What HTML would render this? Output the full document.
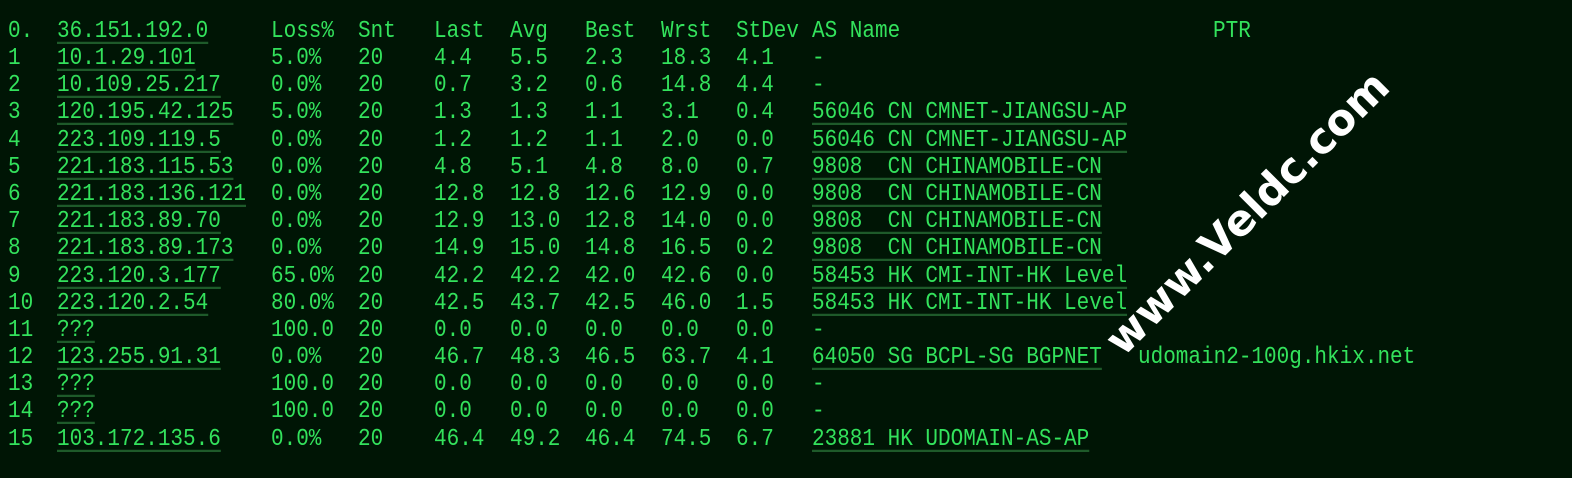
<!DOCTYPE html>
<html><head><meta charset="utf-8"><style>
html,body{margin:0;padding:0}
body{width:1572px;height:478px;background:#001505;overflow:hidden;position:relative;font-family:"Liberation Mono",monospace;font-size:21px;color:#33e25c}
.r{position:absolute;left:0;width:1572px;height:27px;line-height:27px;margin-top:1px}
.r span{position:absolute;white-space:pre;top:0;transform:scaleY(1.13);transform-origin:50% 60%}
.u{text-decoration:underline;text-decoration-color:#1e5a2a;text-decoration-thickness:2px;text-underline-offset:4px}
.c0{left:8px}.c1{left:57px}.c2{left:271px}.c3{left:358px}.c4{left:434px}.c5{left:510px}.c6{left:585px}.c7{left:661px}.c8{left:736px}.c9{left:812px}.c10{left:1138px}
.wm{position:absolute;left:1062px;top:196px;width:350px;text-align:center;font-family:"DejaVu Sans","Liberation Sans",sans-serif;font-weight:bold;font-size:43px;color:#fff;transform:rotate(-45deg);white-space:nowrap;line-height:56px}
</style></head><body>
<div class="r" style="top:18px"><span class="c0">0.</span><span class="c1 u">36.151.192.0</span><span class="c2">Loss%</span><span class="c3">Snt</span><span class="c4">Last</span><span class="c5">Avg</span><span class="c6">Best</span><span class="c7">Wrst</span><span class="c8">StDev</span><span class="c9">AS Name</span><span style="left:1213px">PTR</span></div>
<div class="r" style="top:45px"><span class="c0">1</span><span class="c1 u">10.1.29.101</span><span class="c2">5.0%</span><span class="c3">20</span><span class="c4">4.4</span><span class="c5">5.5</span><span class="c6">2.3</span><span class="c7">18.3</span><span class="c8">4.1</span><span class="c9">-</span></div>
<div class="r" style="top:72px"><span class="c0">2</span><span class="c1 u">10.109.25.217</span><span class="c2">0.0%</span><span class="c3">20</span><span class="c4">0.7</span><span class="c5">3.2</span><span class="c6">0.6</span><span class="c7">14.8</span><span class="c8">4.4</span><span class="c9">-</span></div>
<div class="r" style="top:99px"><span class="c0">3</span><span class="c1 u">120.195.42.125</span><span class="c2">5.0%</span><span class="c3">20</span><span class="c4">1.3</span><span class="c5">1.3</span><span class="c6">1.1</span><span class="c7">3.1</span><span class="c8">0.4</span><span class="c9 u">56046 CN CMNET-JIANGSU-AP</span></div>
<div class="r" style="top:127px"><span class="c0">4</span><span class="c1 u">223.109.119.5</span><span class="c2">0.0%</span><span class="c3">20</span><span class="c4">1.2</span><span class="c5">1.2</span><span class="c6">1.1</span><span class="c7">2.0</span><span class="c8">0.0</span><span class="c9 u">56046 CN CMNET-JIANGSU-AP</span></div>
<div class="r" style="top:154px"><span class="c0">5</span><span class="c1 u">221.183.115.53</span><span class="c2">0.0%</span><span class="c3">20</span><span class="c4">4.8</span><span class="c5">5.1</span><span class="c6">4.8</span><span class="c7">8.0</span><span class="c8">0.7</span><span class="c9 u">9808  CN CHINAMOBILE-CN</span></div>
<div class="r" style="top:181px"><span class="c0">6</span><span class="c1 u">221.183.136.121</span><span class="c2">0.0%</span><span class="c3">20</span><span class="c4">12.8</span><span class="c5">12.8</span><span class="c6">12.6</span><span class="c7">12.9</span><span class="c8">0.0</span><span class="c9 u">9808  CN CHINAMOBILE-CN</span></div>
<div class="r" style="top:208px"><span class="c0">7</span><span class="c1 u">221.183.89.70</span><span class="c2">0.0%</span><span class="c3">20</span><span class="c4">12.9</span><span class="c5">13.0</span><span class="c6">12.8</span><span class="c7">14.0</span><span class="c8">0.0</span><span class="c9 u">9808  CN CHINAMOBILE-CN</span></div>
<div class="r" style="top:235px"><span class="c0">8</span><span class="c1 u">221.183.89.173</span><span class="c2">0.0%</span><span class="c3">20</span><span class="c4">14.9</span><span class="c5">15.0</span><span class="c6">14.8</span><span class="c7">16.5</span><span class="c8">0.2</span><span class="c9 u">9808  CN CHINAMOBILE-CN</span></div>
<div class="r" style="top:263px"><span class="c0">9</span><span class="c1 u">223.120.3.177</span><span class="c2">65.0%</span><span class="c3">20</span><span class="c4">42.2</span><span class="c5">42.2</span><span class="c6">42.0</span><span class="c7">42.6</span><span class="c8">0.0</span><span class="c9 u">58453 HK CMI-INT-HK Level</span></div>
<div class="r" style="top:290px"><span class="c0">10</span><span class="c1 u">223.120.2.54</span><span class="c2">80.0%</span><span class="c3">20</span><span class="c4">42.5</span><span class="c5">43.7</span><span class="c6">42.5</span><span class="c7">46.0</span><span class="c8">1.5</span><span class="c9 u">58453 HK CMI-INT-HK Level</span></div>
<div class="r" style="top:317px"><span class="c0">11</span><span class="c1 u">???</span><span class="c2">100.0</span><span class="c3">20</span><span class="c4">0.0</span><span class="c5">0.0</span><span class="c6">0.0</span><span class="c7">0.0</span><span class="c8">0.0</span><span class="c9">-</span></div>
<div class="r" style="top:344px"><span class="c0">12</span><span class="c1 u">123.255.91.31</span><span class="c2">0.0%</span><span class="c3">20</span><span class="c4">46.7</span><span class="c5">48.3</span><span class="c6">46.5</span><span class="c7">63.7</span><span class="c8">4.1</span><span class="c9 u">64050 SG BCPL-SG BGPNET</span><span class="c10">udomain2-100g.hkix.net</span></div>
<div class="r" style="top:371px"><span class="c0">13</span><span class="c1 u">???</span><span class="c2">100.0</span><span class="c3">20</span><span class="c4">0.0</span><span class="c5">0.0</span><span class="c6">0.0</span><span class="c7">0.0</span><span class="c8">0.0</span><span class="c9">-</span></div>
<div class="r" style="top:398px"><span class="c0">14</span><span class="c1 u">???</span><span class="c2">100.0</span><span class="c3">20</span><span class="c4">0.0</span><span class="c5">0.0</span><span class="c6">0.0</span><span class="c7">0.0</span><span class="c8">0.0</span><span class="c9">-</span></div>
<div class="r" style="top:426px"><span class="c0">15</span><span class="c1 u">103.172.135.6</span><span class="c2">0.0%</span><span class="c3">20</span><span class="c4">46.4</span><span class="c5">49.2</span><span class="c6">46.4</span><span class="c7">74.5</span><span class="c8">6.7</span><span class="c9 u">23881 HK UDOMAIN-AS-AP</span></div>
<div class="wm">www.Veldc.com</div>
</body></html>
